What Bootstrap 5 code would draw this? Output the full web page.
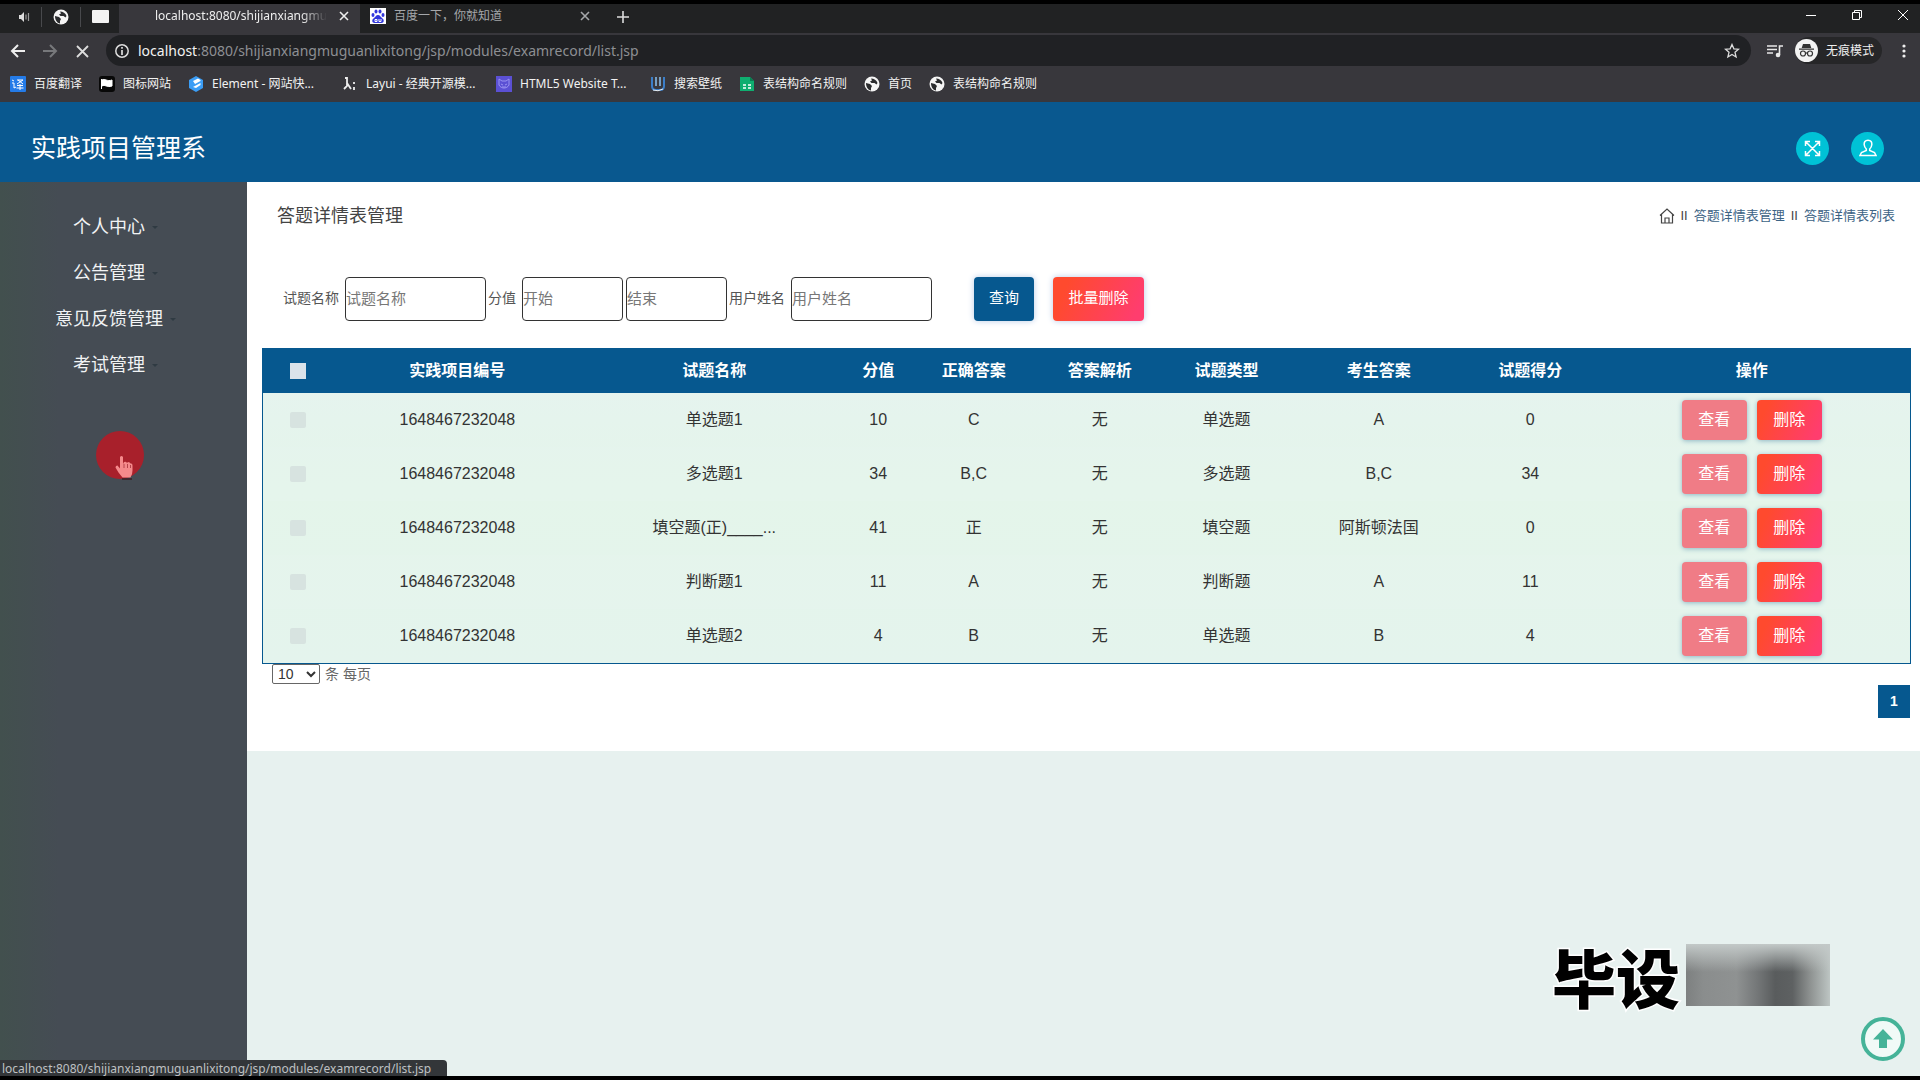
<!DOCTYPE html>
<html lang="zh-CN">
<head>
<meta charset="utf-8">
<meta name="viewport" content="width=device-width, initial-scale=1">
<title>答题详情表管理</title>
<link href="https://cdn.jsdelivr.net/npm/bootstrap@5.3.0/dist/css/bootstrap.min.css" rel="stylesheet">
<style>
:root{--brand:#06588f;--ui:"Noto Sans","Noto Sans CJK SC",sans-serif;--page:"Liberation Sans","Noto Sans CJK SC",sans-serif}
body{font-family:var(--page);background:#000;padding:4px 0;font-size:16px;color:#333}
a{text-decoration:none;color:inherit}
svg{flex:none;display:block}
.plain{background:none;border:0;padding:0;color:inherit;display:flex}
/* browser chrome */
.chrome{font-family:var(--ui);font-size:13px;line-height:20px;color:#eee;background:#38373c}
.tabstrip{background:#212223;height:29px}
.pinned{width:39px;border-right:1px solid #48494c;height:20px;margin-bottom:4px}
.pinned:first-child{width:42px;padding-left:6px}
.pinned:nth-child(3){border:0;width:38px}
.tab-item{width:241px;height:29px;font-size:12px;padding:0 10px 5px 36px}
.tab-item.current{background:#38373c}
.tab-item.other{padding-left:10px;color:#a5a7aa}
.tab-name{white-space:nowrap}
.current .tab-name{-webkit-mask-image:linear-gradient(90deg,#000 85%,transparent)}
.winctl{gap:34px;padding-right:11px}
.toolbar{height:35px;padding:0 10px}
.omni{background:#202124;border-radius:16px;height:31px;font-size:14px;color:#8d8f93;padding:0 11px 0 8px}
.omni b{font-weight:400;color:#f2f2f2}
.queue{margin:0 12px 0 20px}
.incog{background:#262628;border-radius:14px;height:27px;padding-right:8px;font-size:12px}
.bookmarks{height:34px;padding:0 10px 2px;font-size:12px;gap:17px;color:#f2f2f2}
.bookmarks a{display:flex;align-items:center;gap:8px;white-space:nowrap}
.bookmarks .wide{width:137px}
/* application */
.topbar{background:#09588f;height:80px;padding:12px 36px 0 31px;gap:22px}
.topbar h1{font-size:25px;line-height:32px;color:#fff}
.round{width:33px;height:33px;border-radius:50%;background:#00c2d6;color:#fff;border:0;padding:0;place-items:center}
.side{width:247px;background:linear-gradient(90deg,#42504e,#454c54 24%,#454c54);padding-top:22px;flex:none}
.side a{display:flex;align-items:center;justify-content:center;height:46px;font-size:18px;color:#f1f3f4;gap:7px;padding-right:16px}
.side a::after{content:"";border:3px solid transparent;border-top-color:#2f3a42;margin-top:3px}
.content{background:#e7f1ef}
.panel{background:#fff;padding:0 9px 33px 15px}
.pagehead{height:67px;padding:0 16px 0 15px}
.pagehead h2{font-size:18px;line-height:24px;color:#444}
.crumbs{font-size:13px;color:#3c6385;gap:6px}
.crumbs i{font-style:normal;color:#444}
.filter{padding:0 19px;height:99px;font-size:14px;color:#555}
.filter label{margin:0 6px 0 2px}
.filter input{height:44px;width:141px;border:1px solid #333;border-radius:4px;padding:0;font-size:15px;color:#555;background:#fff}
.filter input.num{width:101px}
.filter input.num + .num{margin-left:3px}
.filter input::placeholder{color:#777}
.ops{gap:10px}
.act{border:0;border-radius:4px;color:#fff;height:40px;width:65px;font-size:16px;padding:0;box-shadow:0 1px 5px #8fb7c4}
.filter .act{height:44px;width:91px;font-size:15px;box-shadow:0 0 6px #b8cbe6}
.filter .query{width:60px;background:var(--brand);margin:0 19px 0 42px}
.red{background:linear-gradient(115deg,#ff4a2e 15%,#ff3d6e 90%)}
.pink{background:#f07c86}
.grid{width:100%;table-layout:fixed;border:1px solid var(--brand);border-collapse:separate;border-spacing:0;text-align:center;background:linear-gradient(#e6f3f0,#e4f5ea 45%,#e4f4ed)}
.grid th{background:var(--brand);color:#fff;height:44px;padding:0;font-size:16px}
.grid td{height:54px;padding:0;color:#333;white-space:nowrap}
.grid tbody tr:nth-child(even) td{background:#e7f7f055}
.grid input{appearance:none;width:16px;height:16px;background:#d7e3e0;border-radius:2px;display:block;margin:0 auto}
.grid th input{background:#dbe3ea;border-radius:0}
.perpage{font-size:14px;line-height:20px;color:#666;padding-left:10px;gap:5px}
.perpage select{width:48px;height:20px;font-size:14px;line-height:16px;padding:0 0 0 1px;border:1px solid #666;border-radius:2px;background:#fff;color:#333}
.pager{margin:1px 1px 0}
.pager a{background:var(--brand);color:#fff;width:32px;height:33px;font-size:14px;font-weight:700;display:grid;place-items:center}
/* overlays */
.clickspot{position:absolute;left:96px;top:431px}
.wm{position:absolute;right:90px;bottom:74px;height:62px;font:900 64px/62px "Noto Sans CJK SC",sans-serif;color:#000;-webkit-text-stroke:3px #fff;paint-order:stroke fill}
.smudge{width:144px;height:62px;margin-left:6px;background:linear-gradient(#c3c9c8,#c3c9c800 45%),linear-gradient(90deg,#7d8080,#8a8d8d 12%,#8f9292 35%,#737677 50%,#595c5d 62%,#5e6162 74%,#8d9190 86%,#bdc5c3)}
.totop{position:absolute;right:14px;bottom:18px}
.status{position:absolute;left:0;bottom:4px;width:447px;height:16px;background:#333639;color:#bfc1c3;border-top-right-radius:4px;font:12px/18px var(--ui);padding-left:2px;white-space:nowrap}
</style>
</head>
<body class="min-vh-100 d-flex flex-column position-relative">
<svg width="0" height="0" class="position-absolute"><defs>
<symbol id="globe" viewBox="0 0 16 16"><circle cx="8" cy="8" r="7.500" fill="#f5f5f5"/><path d="M2 7l4 1 2 2-1 2 0 2.500C4 14 2 11 2 7zM7 2.500c3 0 5.500 1.500 6.500 4.500l-1 1.500-2-1.500-3 0L6 5.500l2-1z" fill="#2b2c2e"/></symbol>
<symbol id="cross" viewBox="0 0 12 12"><path d="M2 2l8 8M10 2l-8 8" stroke="currentColor" stroke-width="1.600" fill="none"/></symbol>
</defs></svg>

<header class="chrome">
  <div class="tabstrip d-flex align-items-center">
    <div class="pinned d-flex align-items-center justify-content-center"><svg width="12" height="12" viewBox="0 0 12 12"><path d="M1 4h2l3-3v10L3 8H1z" fill="#ddd"/><path d="M8 3.500v5M10.500 2v8" stroke="#999" stroke-width="1.200"/></svg></div>
    <div class="pinned d-flex align-items-center justify-content-center"><svg width="16" height="16"><use href="#globe"/></svg></div>
    <div class="pinned d-flex align-items-center justify-content-center"><svg width="17" height="13"><rect width="17" height="13" rx="1" fill="#f3f3f3"/></svg></div>
    <div class="tab-item current d-flex align-items-center justify-content-between"><span class="tab-name">localhost:8080/shijianxiangmu</span><button class="plain" aria-label="关闭"><svg width="12" height="12"><use href="#cross"/></svg></button></div>
    <div class="tab-item other d-flex align-items-center gap-2"><svg width="16" height="16" viewBox="0 0 16 16"><rect width="16" height="16" fill="#fff"/><g fill="#3136dd"><ellipse cx="3" cy="7" rx="1.500" ry="2"/><ellipse cx="6" cy="3.500" rx="1.500" ry="2.100"/><ellipse cx="10" cy="3.500" rx="1.500" ry="2.100"/><ellipse cx="13" cy="7" rx="1.500" ry="2"/><path d="M8 7c2 0 2.500 2 4.500 3.500s1.500 4.500-1 4.500H4.500c-2.500 0-3-3-1-4.500S6 7 8 7z"/></g><path d="M5 11.500h2v2H5zM9 11v2.500h2V11" fill="none" stroke="#fff"/></svg><span class="tab-name flex-grow-1">百度一下，你就知道</span><button class="plain" aria-label="关闭"><svg width="12" height="12"><use href="#cross"/></svg></button></div>
    <button class="plain ps-3 pb-1" aria-label="新标签页"><svg width="12" height="12"><path d="M6 0v12M0 6h12" stroke="#ddd" stroke-width="1.600"/></svg></button>
    <div class="winctl d-flex ms-auto align-items-center pb-2">
      <button class="plain" aria-label="最小化"><svg width="12" height="12"><path d="M1 6.500h10" stroke="#fff"/></svg></button>
      <button class="plain" aria-label="还原"><svg width="12" height="12" fill="none" stroke="#fff"><path d="M1.500 3.500h7v7h-7zM3.500 3V1.500h7v7H9"/></svg></button>
      <button class="plain" aria-label="关闭窗口"><svg width="12" height="12" fill="none" stroke="#fff"><path d="M1 1l10 10M11 1L1 11"/></svg></button>
    </div>
  </div>
  <div class="toolbar d-flex align-items-center">
    <button class="plain me-3" aria-label="后退"><svg width="16" height="16" fill="none" stroke="#eee" stroke-width="2"><path d="M15 8H2M8 2L2 8l6 6"/></svg></button>
    <button class="plain me-3" aria-label="前进"><svg width="16" height="16" fill="none" stroke="#77787b" stroke-width="2"><path d="M1 8h13M8 2l6 6-6 6"/></svg></button>
    <button class="plain me-3" aria-label="停止"><svg width="16" height="16" fill="none" stroke="#ddd" stroke-width="1.800"><path d="M3 3l11 11M14 3L3 14"/></svg></button>
    <div class="omni flex-grow-1 d-flex align-items-center gap-2"><svg width="16" height="16" viewBox="0 0 16 16"><circle cx="8" cy="8" r="6.200" fill="none" stroke="#ddd" stroke-width="1.500"/><path d="M8 7v5M8 4v1.800" stroke="#ddd" stroke-width="1.700"/></svg><span class="flex-grow-1"><b>localhost</b>:8080/shijianxiangmuguanlixitong/jsp/modules/examrecord/list.jsp</span><svg width="16" height="16" viewBox="0 0 16 16" fill="none" stroke="#ddd" stroke-width="1.300"><path d="M8 1.500l1.900 4.300 4.600.4-3.500 3.100 1.100 4.700L8 11.500 3.900 14 5 9.300 1.500 6.200l4.600-.4z"/></svg></div>
    <svg class="queue ms-2 ps-0" width="24" height="16" viewBox="-8 0 24 16" fill="none" stroke="#e8e8e8" stroke-width="1.600"><path d="M0 3h10M0 6.500h10M0 10h6M12.500 12V3H16"/><circle cx="11" cy="12" r="1.500" fill="#e8e8e8"/></svg>
    <div class="incog d-flex align-items-center gap-2"><svg width="23" height="23" viewBox="0 0 23 23"><circle cx="11.500" cy="11.500" r="11.500" fill="#f3f3f3"/><path d="M8 5h7l1.300 4H6.700zM4 9.500h15v1.200H4z" fill="#333"/><g fill="none" stroke="#333" stroke-width="1.200"><circle cx="8" cy="14.500" r="2.500"/><circle cx="15" cy="14.500" r="2.500"/><path d="M10.500 14h2"/></g></svg><span>无痕模式</span></div>
    <button class="plain ms-3" aria-label="菜单"><svg width="12" height="16" fill="#eee"><circle cx="6" cy="3" r="1.600"/><circle cx="6" cy="8" r="1.600"/><circle cx="6" cy="13" r="1.600"/></svg></button>
  </div>
  <nav class="bookmarks d-flex align-items-center">
    <a href="#"><svg width="16" height="16"><rect width="16" height="16" rx="1" fill="#247be8"/><path d="M2 4l2 1M2 7h2v5l2-1M7 4h6l-6 4M8 4l5 4M7 9.500h6M6.500 12h7M10 8v6" fill="none" stroke="#fff"/></svg>百度翻译</a>
    <a href="#"><svg width="16" height="16"><rect width="16" height="16" rx="3" fill="#080808"/><path d="M2.500 3v10M3 4c3-2 5 2 10 0v6c-5 2-7-2-10 0z" fill="#fff" stroke="#fff"/></svg>图标网站</a>
    <a href="#" class="wide"><svg width="16" height="16" viewBox="0 0 16 16"><path d="M8 0l7 4v8l-7 4-7-4V4z" fill="#3b9df5"/><path d="M5 5l5-2.500L12.500 4v1L7 8zM5 11l7.500-4v2L8 12z" fill="#fff"/></svg>Element - 网站快...</a>
    <a href="#" class="wide"><svg width="16" height="16" fill="none" stroke="#eee" stroke-width="1.800"><path d="M3 2h2v8l-3 3M5 7l4 6M12 6v2M12 11v3"/></svg>Layui - 经典开源模...</a>
    <a href="#" class="wide"><svg width="16" height="16"><rect width="16" height="16" fill="#5b50d4"/><path d="M3 3l3 2h4l3-2v6c-2 4-8 4-10 0zM5 8l2 1M11 8L9 9M6 11h4" fill="none" stroke="#9a92f0"/></svg>HTML5 Website T...</a>
    <a href="#"><svg width="16" height="16" fill="none"><path d="M2 1v9q0 4 4 4h4q4 0 4-4V1" stroke="#3b7ec8" stroke-width="2"/><path d="M6 1v9M10 1v9" stroke="#8cc2f0" stroke-width="1.500"/><path d="M3 14q5 2 10-1" stroke="#eee"/></svg>搜索壁纸</a>
    <a href="#"><svg width="16" height="16"><path d="M1 1h10l4 4v10H1z" fill="#0fae70"/><path d="M11 1v4h4" fill="#087d50"/><path d="M4 9h3M9 9h3M4 12h3M9 12h3" stroke="#fff" stroke-width="1.300"/></svg>表结构命名规则</a>
    <a href="#"><svg width="16" height="16"><use href="#globe"/></svg>首页</a>
    <a href="#"><svg width="16" height="16"><use href="#globe"/></svg>表结构命名规则</a>
  </nav>
</header>

<header class="topbar d-flex align-items-center">
  <h1 class="m-0 fw-normal me-auto">实践项目管理系</h1>
  <button class="round d-grid" aria-label="全屏"><svg width="17" height="17" viewBox="0 0 17 17" fill="none" stroke="#fff" stroke-width="1.500"><path d="M2 2l13 13M15 2L2 15M1.500 6V1.500H6M11 1.500h4.500V6M15.500 11v4.500H11M6 15.500H1.500V11"/></svg></button>
  <button class="round d-grid" aria-label="用户"><svg width="18" height="18" viewBox="0 0 18 18" fill="none" stroke="#fff" stroke-width="1.500"><path d="M9 1.200c-3 0-4 2-3.800 4.500.2 2 1 3.300 2.100 4.300v1.500L2.500 13.500 1 16.500h16l-1.500-3-4.800-2V10c1.100-1 1.900-2.300 2.100-4.300C13 3.200 12 1.200 9 1.200z"/></svg></button>
</header>

<div class="d-flex flex-grow-1">
  <nav class="side">
    <a href="#">个人中心</a><a href="#">公告管理</a><a href="#">意见反馈管理</a><a href="#">考试管理</a>
  </nav>
  <main class="content flex-grow-1">
    <section class="panel">
      <div class="pagehead d-flex align-items-center justify-content-between">
        <h2 class="m-0 fw-normal">答题详情表管理</h2>
        <nav class="crumbs d-flex align-items-center" aria-label="breadcrumb"><svg width="16" height="16" viewBox="0 0 16 16" fill="none" stroke="#444" stroke-width="1.200"><path d="M1 7.500L8 1l7 6.500M2.500 6.500V15h11V6.500M6 15v-5h4v5"/></svg><i>II</i><a href="#">答题详情表管理</a><i>II</i><a href="#">答题详情表列表</a></nav>
      </div>
      <form class="filter d-flex align-items-center">
        <label for="q1">试题名称</label><input id="q1" placeholder="试题名称">
        <label for="q2">分值</label><input id="q2" class="num" placeholder="开始"><input id="q3" aria-label="结束" class="num" placeholder="结束">
        <label for="q4">用户姓名</label><input id="q4" placeholder="用户姓名">
        <button type="button" class="act query">查询</button><button type="button" class="act red">批量删除</button>
      </form>
      <table class="grid">
        <colgroup><col style="width:4.200%"><col style="width:15.200%"><col style="width:16%"><col style="width:3.900%"><col style="width:7.700%"><col style="width:7.600%"><col style="width:7.800%"><col style="width:10.700%"><col style="width:7.700%"><col style="width:19.200%"></colgroup>
        <thead><tr><th><input type="checkbox" aria-label="全选"></th><th>实践项目编号</th><th>试题名称</th><th>分值</th><th>正确答案</th><th>答案解析</th><th>试题类型</th><th>考生答案</th><th>试题得分</th><th>操作</th></tr></thead>
        <tbody>
          <tr><td><input type="checkbox" aria-label="选择"></td><td>1648467232048</td><td>单选题1</td><td>10</td><td>C</td><td>无</td><td>单选题</td><td>A</td><td>0</td><td><div class="d-flex justify-content-center ops"><button class="act pink">查看</button><button class="act red">删除</button></div></td></tr>
          <tr><td><input type="checkbox" aria-label="选择"></td><td>1648467232048</td><td>多选题1</td><td>34</td><td>B,C</td><td>无</td><td>多选题</td><td>B,C</td><td>34</td><td><div class="d-flex justify-content-center ops"><button class="act pink">查看</button><button class="act red">删除</button></div></td></tr>
          <tr><td><input type="checkbox" aria-label="选择"></td><td>1648467232048</td><td>填空题(正)____...</td><td>41</td><td>正</td><td>无</td><td>填空题</td><td>阿斯顿法国</td><td>0</td><td><div class="d-flex justify-content-center ops"><button class="act pink">查看</button><button class="act red">删除</button></div></td></tr>
          <tr><td><input type="checkbox" aria-label="选择"></td><td>1648467232048</td><td>判断题1</td><td>11</td><td>A</td><td>无</td><td>判断题</td><td>A</td><td>11</td><td><div class="d-flex justify-content-center ops"><button class="act pink">查看</button><button class="act red">删除</button></div></td></tr>
          <tr><td><input type="checkbox" aria-label="选择"></td><td>1648467232048</td><td>单选题2</td><td>4</td><td>B</td><td>无</td><td>单选题</td><td>B</td><td>4</td><td><div class="d-flex justify-content-center ops"><button class="act pink">查看</button><button class="act red">删除</button></div></td></tr>
        </tbody>
      </table>
      <div class="perpage d-flex align-items-center"><select id="pp"><option>10</option><option>25</option></select><label for="pp">条 每页</label></div>
      <div class="pager d-flex justify-content-end"><a href="#">1</a></div>
    </section>
  </main>
</div>

<svg class="clickspot" width="48" height="50" viewBox="0 0 48 50"><circle cx="24" cy="24" r="24" fill="#a8202b"/><path d="M24 26q1.500-2 3 0v7l1-2q2-1 3 1l1-1q2 0 2.500 1.500 2-.5 2 2v5q0 4-2 7h-8l-4-5-3-5q0-2 2-2l2.500 3z" fill="#f58a8c"/><path d="M28 33v4M31.500 33v4M34.500 34v3" stroke="#b5434b" fill="none"/><path d="M26 48h10" stroke="#3d1c24" stroke-width="1.500"/></svg>
<div class="wm d-flex align-items-center"><span>毕设</span><div class="smudge"></div></div>
<a href="#" class="totop" aria-label="返回顶部"><svg width="46" height="46" viewBox="0 0 46 46"><circle cx="23" cy="23" r="20" fill="#f1faf7" stroke="#45b398" stroke-width="4"/><path d="M23 13l10 10.500h-6V32h-8v-8.500h-6z" fill="#45b398"/></svg></a>
<div class="status">localhost:8080/shijianxiangmuguanlixitong/jsp/modules/examrecord/list.jsp</div>
<script src="https://cdn.jsdelivr.net/npm/bootstrap@5.3.0/dist/js/bootstrap.bundle.min.js"></script>
</body>
</html>
